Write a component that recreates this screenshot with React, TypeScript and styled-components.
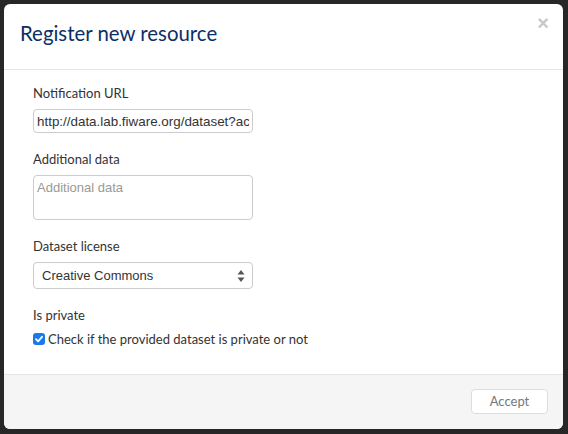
import styled, { createGlobalStyle } from 'styled-components';

const GlobalStyle = createGlobalStyle`
  html, body {
    margin: 0;
    padding: 0;
    background: #272727;
  }
  body {
    font-family: Lato, 'Liberation Sans', sans-serif;
  }
`;

const licenses = ['Creative Commons', 'Open Data Commons', 'Public Domain'];

const App = () => (
  <>
    <GlobalStyle />
    <Backdrop>
      <Modal>
        <ModalHeader>
          <ModalTitle>Register new resource</ModalTitle>
          <CloseButton type="button" aria-label="Close">×</CloseButton>
        </ModalHeader>

        <ModalBody>
          <Field>
            <Label htmlFor="url">Notification URL</Label>
            <TextInput
              id="url"
              type="text"
              defaultValue="http://data.lab.fiware.org/dataset?action=notify"
            />
          </Field>

          <Field>
            <Label htmlFor="extra">Additional data</Label>
            <TextArea id="extra" placeholder="Additional data" />
          </Field>

          <Field>
            <Label htmlFor="license">Dataset license</Label>
            <SelectWrap>
              <Select id="license" defaultValue={licenses[0]}>
                {licenses.map((l) => (
                  <option key={l}>{l}</option>
                ))}
              </Select>
              <SelectArrows viewBox="0 0 8 14" width={8} height={14}>
                <path d="M4 1 L7.5 5.5 H0.5 Z" fill="#555" />
                <path d="M4 13 L7.5 8.5 H0.5 Z" fill="#555" />
              </SelectArrows>
            </SelectWrap>
          </Field>

          <Field>
            <Label as="div" $tight>Is private</Label>
            <CheckRow>
              <CheckBox>
                <svg viewBox="0 0 12 12" width={12} height={12}>
                  <path
                    d="M3 6.2 L5.1 8.3 L9 3.8"
                    fill="none"
                    stroke="#fff"
                    strokeWidth={1.8}
                    strokeLinecap="round"
                    strokeLinejoin="round"
                  />
                </svg>
              </CheckBox>
              Check if the provided dataset is private or not
            </CheckRow>
          </Field>
        </ModalBody>

        <ModalFooter>
          <AcceptButton type="button">Accept</AcceptButton>
        </ModalFooter>
      </Modal>
    </Backdrop>
  </>
);

const Backdrop = styled.div`
  width: 568px;
  height: 434px;
  padding: 4px 5px 5px 4px;
  box-sizing: border-box;
`;

const Modal = styled.div`
  display: flex;
  flex-direction: column;
  width: 559px;
  height: 425px;
  background: #fff;
  border-radius: 6px;
  overflow: hidden;
`;

const ModalHeader = styled.div`
  position: relative;
  height: 66px;
  box-sizing: border-box;
  padding: 0 16px;
  display: flex;
  align-items: center;
  border-bottom: 1px solid #e5e5e5;
`;

const ModalTitle = styled.h3`
  margin: 0 0 7px;
  font-size: 20.4px;
  font-weight: 400;
  color: #0c2f66;
`;

const CloseButton = styled.button`
  position: absolute;
  top: 9px;
  right: 14px;
  padding: 0;
  border: 0;
  background: none;
  font-family: 'Liberation Sans', sans-serif;
  font-size: 20px;
  font-weight: 700;
  line-height: 1;
  color: #c8c8c8;
`;

const ModalBody = styled.div`
  flex: 1;
  padding: 13px 29px 0;
  display: flex;
  flex-direction: column;
  gap: 16px;
`;

const Field = styled.div`
  display: flex;
  flex-direction: column;
  align-items: flex-start;
`;

const Label = styled.label<{ $tight?: boolean }>`
  font-size: 13px;
  color: #333;
  line-height: 20px;
  margin-bottom: ${(p) => (p.$tight ? '4px' : '6px')};
`;

const controlBase = `
  box-sizing: border-box;
  width: 220px;
  border: 1px solid #ccc;
  border-radius: 4px;
  font-family: 'Liberation Sans', Arial, sans-serif;
  font-size: 13px;
  color: #333;
  background: #fff;
  outline: none;
`;

const TextInput = styled.input`
  ${controlBase}
  height: 24px;
  padding: 0 3px;
  font-size: 13.4px;
`;

const TextArea = styled.textarea`
  ${controlBase}
  height: 45px;
  padding: 4px 3px;
  resize: none;
  &::placeholder {
    color: #999;
  }
`;

const SelectWrap = styled.div`
  position: relative;
  width: 220px;
`;

const Select = styled.select`
  ${controlBase}
  height: 27px;
  padding: 0 8px;
  appearance: none;
`;

const SelectArrows = styled.svg`
  position: absolute;
  right: 8px;
  top: 7px;
  pointer-events: none;
`;

const CheckRow = styled.label`
  display: flex;
  align-items: center;
  gap: 3px;
  font-size: 13px;
  line-height: 20px;
  color: #333;
`;

const CheckBox = styled.span`
  display: inline-flex;
  align-items: center;
  justify-content: center;
  width: 12px;
  height: 12px;
  border-radius: 3px;
  background: #1a7ae8;
`;

const ModalFooter = styled.div`
  height: 55px;
  box-sizing: border-box;
  border-top: 1px solid #e5e5e5;
  background: #f5f5f5;
  display: flex;
  align-items: center;
  justify-content: flex-end;
  padding: 0 15px 2px;
`;

const AcceptButton = styled.button`
  width: 77px;
  height: 25px;
  border: 1px solid #ddd;
  border-radius: 4px;
  background: #fff;
  font-family: Lato, 'Liberation Sans', sans-serif;
  font-size: 13px;
  color: #777;
`;

export default App;
